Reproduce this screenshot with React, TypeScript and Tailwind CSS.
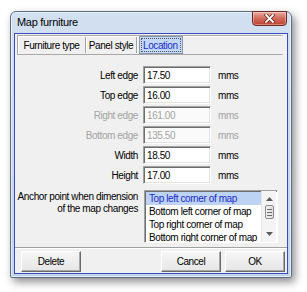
import React from "react";

const font = "font-['Liberation_Sans',Arial,sans-serif] text-[10px] tracking-[-0.4px]";

type Field = { label: string; value: string; disabled?: boolean };

const fields: Field[] = [
  { label: "Left edge", value: "17.50" },
  { label: "Top edge", value: "16.00" },
  { label: "Right edge", value: "161.00", disabled: true },
  { label: "Bottom edge", value: "135.50", disabled: true },
  { label: "Width", value: "18.50" },
  { label: "Height", value: "17.00" },
];

const anchors = [
  "Top left corner of map",
  "Bottom left corner of map",
  "Top right corner of map",
  "Bottom right corner of map",
];

function Btn({ label, className = "" }: { label: string; className?: string }) {
  return (
    <div
      className={`w-[60px] h-[21px] flex items-center justify-center bg-gradient-to-b from-[#f6f6f6] to-[#e6e6e6] border border-t-white border-l-white border-b-[#6a6a6a] border-r-[#6a6a6a] shadow-[inset_-1px_-1px_0_#a8a8a8] ${className}`}
    >
      {label}
    </div>
  );
}

function CloseButton() {
  return (
    <div className="-mt-[1px] w-[35px] h-[15px] rounded-b-[4px] border border-[#6b2a22] bg-gradient-to-b from-[#e6aaa0] via-[#d06a5c] to-[#c0412f] shadow-[inset_0_0_0_1px_rgba(255,255,255,0.35)] flex items-center justify-center">
      <svg width="11" height="9" viewBox="0 0 11 9">
        <path d="M2 1 L9 8 M9 1 L2 8" stroke="#5a1f18" strokeWidth="3.2" strokeLinecap="square" />
        <path d="M2 1 L9 8 M9 1 L2 8" stroke="#ffffff" strokeWidth="1.8" strokeLinecap="square" />
      </svg>
    </div>
  );
}

function ScrollBar() {
  return (
    <div className="w-[15px] mr-[1px] flex flex-col items-center bg-[#f4f4f4] border-l border-[#e6e6e6]">
      <svg width="7" height="4" viewBox="0 0 7 4" className="mt-[6px]">
        <path d="M0 4 L3.5 0 L7 4 Z" fill="#5a5a5a" />
      </svg>
      <div className="mt-[4px] w-[9px] h-[14px] rounded-[2px] border border-[#8c8c8c] bg-gradient-to-r from-[#f4f4f4] to-[#dcdcdc] flex flex-col items-center justify-center gap-[2px]">
        <div className="w-[5px] h-px bg-[#6a6a6a]" />
        <div className="w-[5px] h-px bg-[#6a6a6a]" />
        <div className="w-[5px] h-px bg-[#6a6a6a]" />
      </div>
      <div className="flex-1" />
      <svg width="7" height="4" viewBox="0 0 7 4" className="mb-[6px]">
        <path d="M0 0 L3.5 4 L7 0 Z" fill="#5a5a5a" />
      </svg>
    </div>
  );
}

export default function App() {
  return (
    <div className={`w-[307px] h-[292px] bg-white pl-[10px] pt-[11px] ${font} text-black`}>
      <div className="w-[282px] h-[267px] flex flex-col rounded-t-[6px] rounded-b-[2px] border border-[#5d6d84] bg-gradient-to-b from-[#d2e0f1] to-[#c3d4ea] shadow-[3px_4px_8px_rgba(0,0,0,0.45),inset_0_0_0_1px_rgba(255,255,255,0.55)]">
        {/* title bar */}
        <div className="h-[21px] flex items-start justify-between pl-[6px] pr-[4px]">
          <span className="mt-[4px] font-['Liberation_Sans',Arial,sans-serif] text-[11px] tracking-[-0.3px] leading-[13px]">
            Map furniture
          </span>
          <CloseButton />
        </div>

        {/* client area */}
        <div className="mx-[3px] h-[241px] border border-[#3a4cc0] bg-[#f0f0f0] flex flex-col">
          {/* tabs */}
          <div className="mt-[1px] ml-[2px] w-[266px] h-[20px] flex items-center border border-t-[#a8a8a8] border-l-[#a8a8a8] border-b-[#a8a8a8] border-r-[#f0f0f0] shadow-[inset_1px_1px_0_#ffffff]">
            <div className="w-[67px] h-full flex items-center justify-center">Furniture type</div>
            <div className="w-px h-[16px] bg-[#a0a0a0] shadow-[1px_0_0_#ffffff]" />
            <div className="w-[50px] h-full flex items-center justify-center">Panel style</div>
            <div className="w-px h-[16px] bg-[#a0a0a0] shadow-[1px_0_0_#ffffff]" />
            <div className="ml-[2px] w-[44px] h-[18px] border border-[#8a97aa] bg-[#c2d8f6] p-px">
              <div className="h-full border border-dotted border-[#505a6a] flex items-center pl-[1px] text-[#1c2cc8]">
                Location
              </div>
            </div>
          </div>

          {/* fields */}
          <div className="mt-[11px] flex flex-col gap-[2px]">
            {fields.map((f) => (
              <div key={f.label} className="h-[18px] flex items-center">
                <div className={`w-[123px] text-right ${f.disabled ? "text-[#a3a3a3]" : ""}`}>{f.label}</div>
                <div
                  className={`ml-[5px] w-[68px] h-[18px] flex items-center pl-[3px] border border-t-[#a0a0a0] border-l-[#a0a0a0] border-b-white border-r-white shadow-[inset_1px_1px_0_#6e6e6e,inset_-1px_-1px_0_#e3e3e3] ${
                    f.disabled ? "bg-[#fafafa] text-[#a3a3a3]" : "bg-white"
                  }`}
                >
                  {f.value}
                </div>
                <div className={`ml-[7px] ${f.disabled ? "text-[#a3a3a3]" : ""}`}>mms</div>
              </div>
            ))}
          </div>

          {/* anchor */}
          <div className="mt-[6px] flex items-start">
            <div className="w-[123px] text-right leading-[12px] pt-[1px]">
              Anchor point when dimension
              <br />
              of the map changes
            </div>
            <div className="ml-[6px] w-[134px] h-[53px] flex border border-t-[#a0a0a0] border-l-[#a0a0a0] border-b-white border-r-white shadow-[inset_1px_1px_0_#6e6e6e] bg-white">
              <div className="flex-1 pt-[1px] pl-[1px] overflow-hidden">
                {anchors.map((a, i) => (
                  <div
                    key={a}
                    className={`h-[13px] leading-[13px] pl-[3px] whitespace-nowrap ${
                      i === 0 ? "bg-[#bcd3f3] text-[#1c2cc8]" : ""
                    }`}
                  >
                    {a}
                  </div>
                ))}
              </div>
              <ScrollBar />
            </div>
          </div>

          {/* divider */}
          <div className="mt-[4px] h-[2px] border-t border-[#a0a0a0] border-b border-b-white" />

          {/* buttons */}
          <div className="mt-[2px] flex">
            <Btn label="Delete" className="ml-[6px]" />
            <div className="flex-1" />
            <Btn label="Cancel" />
            <Btn label="OK" className="ml-[4px] mr-[2px]" />
          </div>
        </div>
      </div>
    </div>
  );
}
